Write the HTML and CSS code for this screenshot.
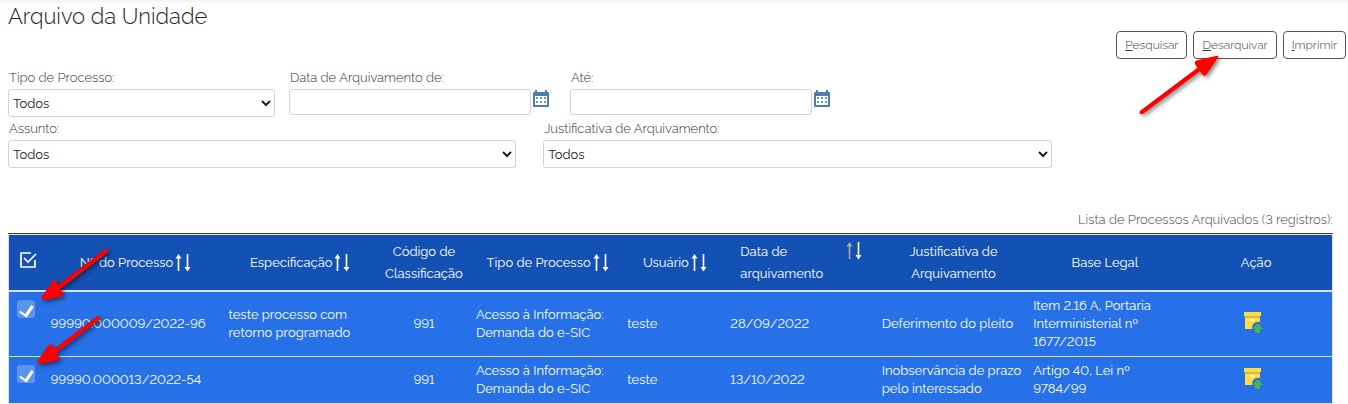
FILE: index.html
```html
<!DOCTYPE html>
<html lang="pt-BR">
<head>
<meta charset="utf-8">
<title>Arquivo da Unidade</title>
<link rel="stylesheet" href="styles.css">
</head>
<body>
<svg class="defs" aria-hidden="true">
  <symbol id="calendar" viewBox="1 0 18 20">
    <path d="M2 3h14a1 1 0 0 1 1 1v13a1 1 0 0 1-1 1H2a1 1 0 0 1-1-1V4a1 1 0 0 1 1-1z" fill="#4c80aa"/>
    <path d="M4 1v3M14 1v3" stroke="#4c80aa" stroke-width="2"/>
    <path d="M3 7h12v9H3z" fill="#fff"/>
    <path d="M4 8h2v2H4zM8 8h2v2H8zM12 8h2v2h-2zM4 12h2v2H4zM8 12h2v2H8zM12 12h2v2h-2z" fill="#6b93b6"/>
  </symbol>
  <symbol id="sort" viewBox="0 0 16 20">
    <path d="M3.500 4v14M12.500 1v14" stroke="#fff" stroke-width="1.600" fill="none"/>
    <path d="M.5 5.500 3.500 1l3 4.500zM9.500 14h6l-3 4.500z" fill="#fff"/>
  </symbol>
  <symbol id="box" viewBox="2 0 24 24">
    <path d="M2 2h17v4H2z" fill="#ffdc3d"/>
    <path d="M3 6h15v2H3z" fill="#d8b84a"/>
    <path d="M3 8h15v4c-5-1-8 2-8 7H3z" fill="#ffdc3d"/>
    <path d="M8 9h5v2H8z" fill="#fffbe0"/>
    <path d="m16 13 5 6h-3v4h-5v-4h-3z" fill="#4caf50"/>
  </symbol>
  <symbol id="arrow-long" viewBox="0 0 88 68">
    <path d="M2.500 61.500 59.500 18.800 57 15Q56 12 60 11L78 7Q82 6 79 10L68 26Q66 28 64 25L62 22.200 5.500 64.500Q2 66 1.500 64Q1.500 62.500 2.500 61.500z" fill="#f00"/>
  </symbol>
  <symbol id="arrow-first" viewBox="0 0 76 60">
    <path d="M65 2Q68 0 69 2Q70 4 68 5L21 41 24 45Q25 48 21 49L5 52Q1 52 3 48L14 33Q16 31 18 34L19 37z" fill="#f00"/>
  </symbol>
  <symbol id="arrow-second" viewBox="0 0 76 60">
    <path d="M61 5Q64 3 65 5Q66 7 64 8L21 41 24 45Q25 48 21 49L5 52Q1 52 3 48L14 33Q16 31 18 34L19 37z" fill="#f00"/>
  </symbol>
</svg>

<main class="page">
  <h1 class="title">Arquivo da Unidade</h1>

  <div class="commands">
    <button type="button" class="btn" accesskey="p"><u>P</u>esquisar</button>
    <div class="marked">
      <button type="button" class="btn" accesskey="d"><u>D</u>esarquivar</button>
      <svg class="pointer pointer-button" aria-hidden="true"><use href="#arrow-long"/></svg>
    </div>
    <button type="button" class="btn" accesskey="i"><u>I</u>mprimir</button>
  </div>

  <form class="filters">
    <div class="row row-dates">
      <div class="field">
        <label for="tipo">Tipo de Processo:</label>
        <select id="tipo" class="control"><option>Todos</option></select>
      </div>
      <div class="field">
        <label for="de">Data de Arquivamento de:</label>
        <div class="date">
          <input id="de" class="control" type="text">
          <button type="button" class="icon-btn" aria-label="Selecionar data inicial"><svg><use href="#calendar"/></svg></button>
        </div>
      </div>
      <div class="field">
        <label for="ate">Até:</label>
        <div class="date">
          <input id="ate" class="control" type="text">
          <button type="button" class="icon-btn" aria-label="Selecionar data final"><svg><use href="#calendar"/></svg></button>
        </div>
      </div>
    </div>
    <div class="row row-subjects">
      <div class="field">
        <label for="assunto">Assunto:</label>
        <select id="assunto" class="control"><option>Todos</option></select>
      </div>
      <div class="field">
        <label for="justificativa">Justificativa de Arquivamento:</label>
        <select id="justificativa" class="control"><option>Todos</option></select>
      </div>
    </div>
  </form>

  <table class="list">
    <caption>Lista de Processos Arquivados (3 registros):</caption>
    <colgroup>
      <col class="c-check"><col class="c-number"><col><col class="c-code"><col><col class="c-user"><col><col><col><col>
    </colgroup>
    <thead>
      <tr>
        <th>
          <button type="button" class="icon-btn" aria-label="Selecionar todos">
            <svg class="check-all" viewBox="0 0 18 18"><path d="M12 2H2v14h14V9M5 7l4 4 8-8" fill="none" stroke="#fff" stroke-width="1.700"/></svg>
          </button>
        </th>
        <th><div class="head">Nº do Processo <svg class="sort"><use href="#sort"/></svg></div></th>
        <th><div class="head">Especificação <svg class="sort"><use href="#sort"/></svg></div></th>
        <th>Código de Classificação</th>
        <th><div class="head">Tipo de Processo <svg class="sort"><use href="#sort"/></svg></div></th>
        <th><div class="head">Usuário <svg class="sort"><use href="#sort"/></svg></div></th>
        <th><div class="head head-date"><span>Data de arquivamento</span>
          <svg class="sort" viewBox="0 0 16 20"><path d="M3.500 4v14" stroke="#a8a8a8" stroke-width="1.600"/><path d="M.5 5.500 3.500 1l3 4.500z" fill="#a8a8a8"/><path d="M12.500 1v14" stroke="#fff" stroke-width="1.600"/><path d="M9.500 14h6l-3 4.500z" fill="#fff"/></svg></div></th>
        <th>Justificativa de Arquivamento</th>
        <th>Base Legal</th>
        <th>Ação</th>
      </tr>
    </thead>
    <tbody>
      <tr>
        <td class="pick"><div class="marked">
          <input type="checkbox" class="check" checked aria-label="99990.000009/2022-96">
          <svg class="pointer pointer-first" aria-hidden="true"><use href="#arrow-first"/></svg>
        </div></td>
        <td>99990.000009/2022-96</td>
        <td>teste processo com retorno programado</td>
        <td class="center">991</td>
        <td>Acesso à Informação: Demanda do e-SIC</td>
        <td>teste</td>
        <td>28/09/2022</td>
        <td>Deferimento do pleito</td>
        <td>Item 2.16 A, Portaria Interministerial nº 1677/2015</td>
        <td class="center"><button type="button" class="icon-btn" aria-label="Desarquivar processo"><svg class="box"><use href="#box"/></svg></button></td>
      </tr>
      <tr>
        <td class="pick"><div class="marked">
          <input type="checkbox" class="check" checked aria-label="99990.000013/2022-54">
          <svg class="pointer pointer-second" aria-hidden="true"><use href="#arrow-second"/></svg>
        </div></td>
        <td>99990.000013/2022-54</td>
        <td></td>
        <td class="center">991</td>
        <td>Acesso à Informação: Demanda do e-SIC</td>
        <td>teste</td>
        <td>13/10/2022</td>
        <td>Inobservância de prazo pelo interessado</td>
        <td>Artigo 40, Lei nº 9784/99</td>
        <td class="center"><button type="button" class="icon-btn" aria-label="Desarquivar processo"><svg class="box"><use href="#box"/></svg></button></td>
      </tr>
    </tbody>
  </table>
</main>
</body>
</html>
```
FILE: styles.css
```css
* { box-sizing: border-box; }

body {
  margin: 0;
  font-family: Raleway, Lato, "Open Sans", sans-serif;
  font-size: 13px;
  line-height: 18px;
  color: #333;
  background: linear-gradient(#f3f3f3, #fff 4px) no-repeat #fff;
}

.defs { position: absolute; width: 0; height: 0; }

.page { padding: 2px 2px 0 8px; }

.title {
  margin: 0;
  padding-bottom: 1px;
  font-size: 22px;
  line-height: 28px;
  font-weight: 300;
  color: #222;
}

.commands {
  display: flex;
  justify-content: flex-end;
  gap: 6px;
}

.btn {
  display: block;
  height: 28px;
  padding: 0 8px;
  border: 1px solid #555;
  border-radius: 4px;
  background: #fff;
  color: #2f3a48;
  font: 300 12px/18px Raleway, Lato, sans-serif;
}

.marked { position: relative; }

.pointer {
  position: absolute;
  z-index: 1;
  pointer-events: none;
  filter: drop-shadow(2px 2px 2px rgba(0, 0, 0, .5));
}
.pointer-button { width: 88px; height: 68px; left: -55px; top: 18px; }
.pointer-first { width: 76px; height: 60px; left: 22px; top: -52px; }
.pointer-second { width: 76px; height: 60px; left: 18px; top: -53px; }

.filters { padding-top: 9px; }
.row { display: grid; height: 51px; }
.row-dates { grid-template-columns: 21% 21% 21%; }
.row-subjects { grid-template-columns: 40% 40%; }

.field label {
  display: block;
  height: 21px;
  padding-left: 1px;
  line-height: 20px;
  font-weight: 300;
}

.control {
  border: 1px solid #ced4da;
  border-radius: 3px;
  background: #fff;
  color: #222;
  font: 13px/18px Raleway, Lato, sans-serif;
}

.field select { display: block; height: 28px; width: 95%; }
.date { display: flex; gap: 2px; }
.date input { height: 26px; width: 86%; }
.date svg { width: 18px; height: 20px; display: block; }

.icon-btn {
  padding: 0;
  border: 0;
  background: none;
  align-self: flex-start;
}

.list {
  width: 99%;
  margin-top: 41px;
  table-layout: fixed;
  border-collapse: collapse;
  border: 1px solid #dee2e6;
  color: #fff;
  font-variant-numeric: lining-nums;
}

.list caption {
  padding-bottom: 4px;
  border-bottom: 1px solid #3d5216;
  text-align: right;
  font-weight: 300;
  color: #444;
}

.c-check { width: 38px; }
.c-number { width: 178px; }
.c-code { width: 96px; }
.c-user { width: 103px; }

.list th {
  padding: 6px 4px 5px;
  background: #1351b4;
  border-bottom: 2px solid #dee2e6;
  font-weight: 400;
  line-height: 22px;
}

.list td {
  padding: 5px 4px;
  background: #2670e8;
  border-bottom: 1px solid #dee2e6;
}

.head {
  display: flex;
  align-items: center;
  justify-content: center;
  gap: 2px;
  white-space: nowrap;
}
.head-date {
  align-items: flex-start;
  justify-content: space-between;
  padding: 0 12px 0 10px;
  text-align: left;
  white-space: normal;
}
.head-date span { width: 84px; }

.sort { width: 16px; height: 20px; flex: none; }
.check-all { display: block; width: 18px; height: 18px; }
.box { display: block; width: 24px; height: 24px; }
.list .center { text-align: center; }

.list .pick {
  padding: 8px;
  vertical-align: top;
}

.check {
  appearance: none;
  display: grid;
  justify-items: center;
  align-items: start;
  width: 18px;
  height: 18px;
  margin: 0;
  padding-top: 3px;
  border-radius: 3px;
  background: #5c93ed;
}
.check:checked::after {
  content: "";
  width: 6px;
  height: 11px;
  border: solid #fff;
  border-width: 0 3px 2px 0;
  transform: rotate(34deg);
}
```
